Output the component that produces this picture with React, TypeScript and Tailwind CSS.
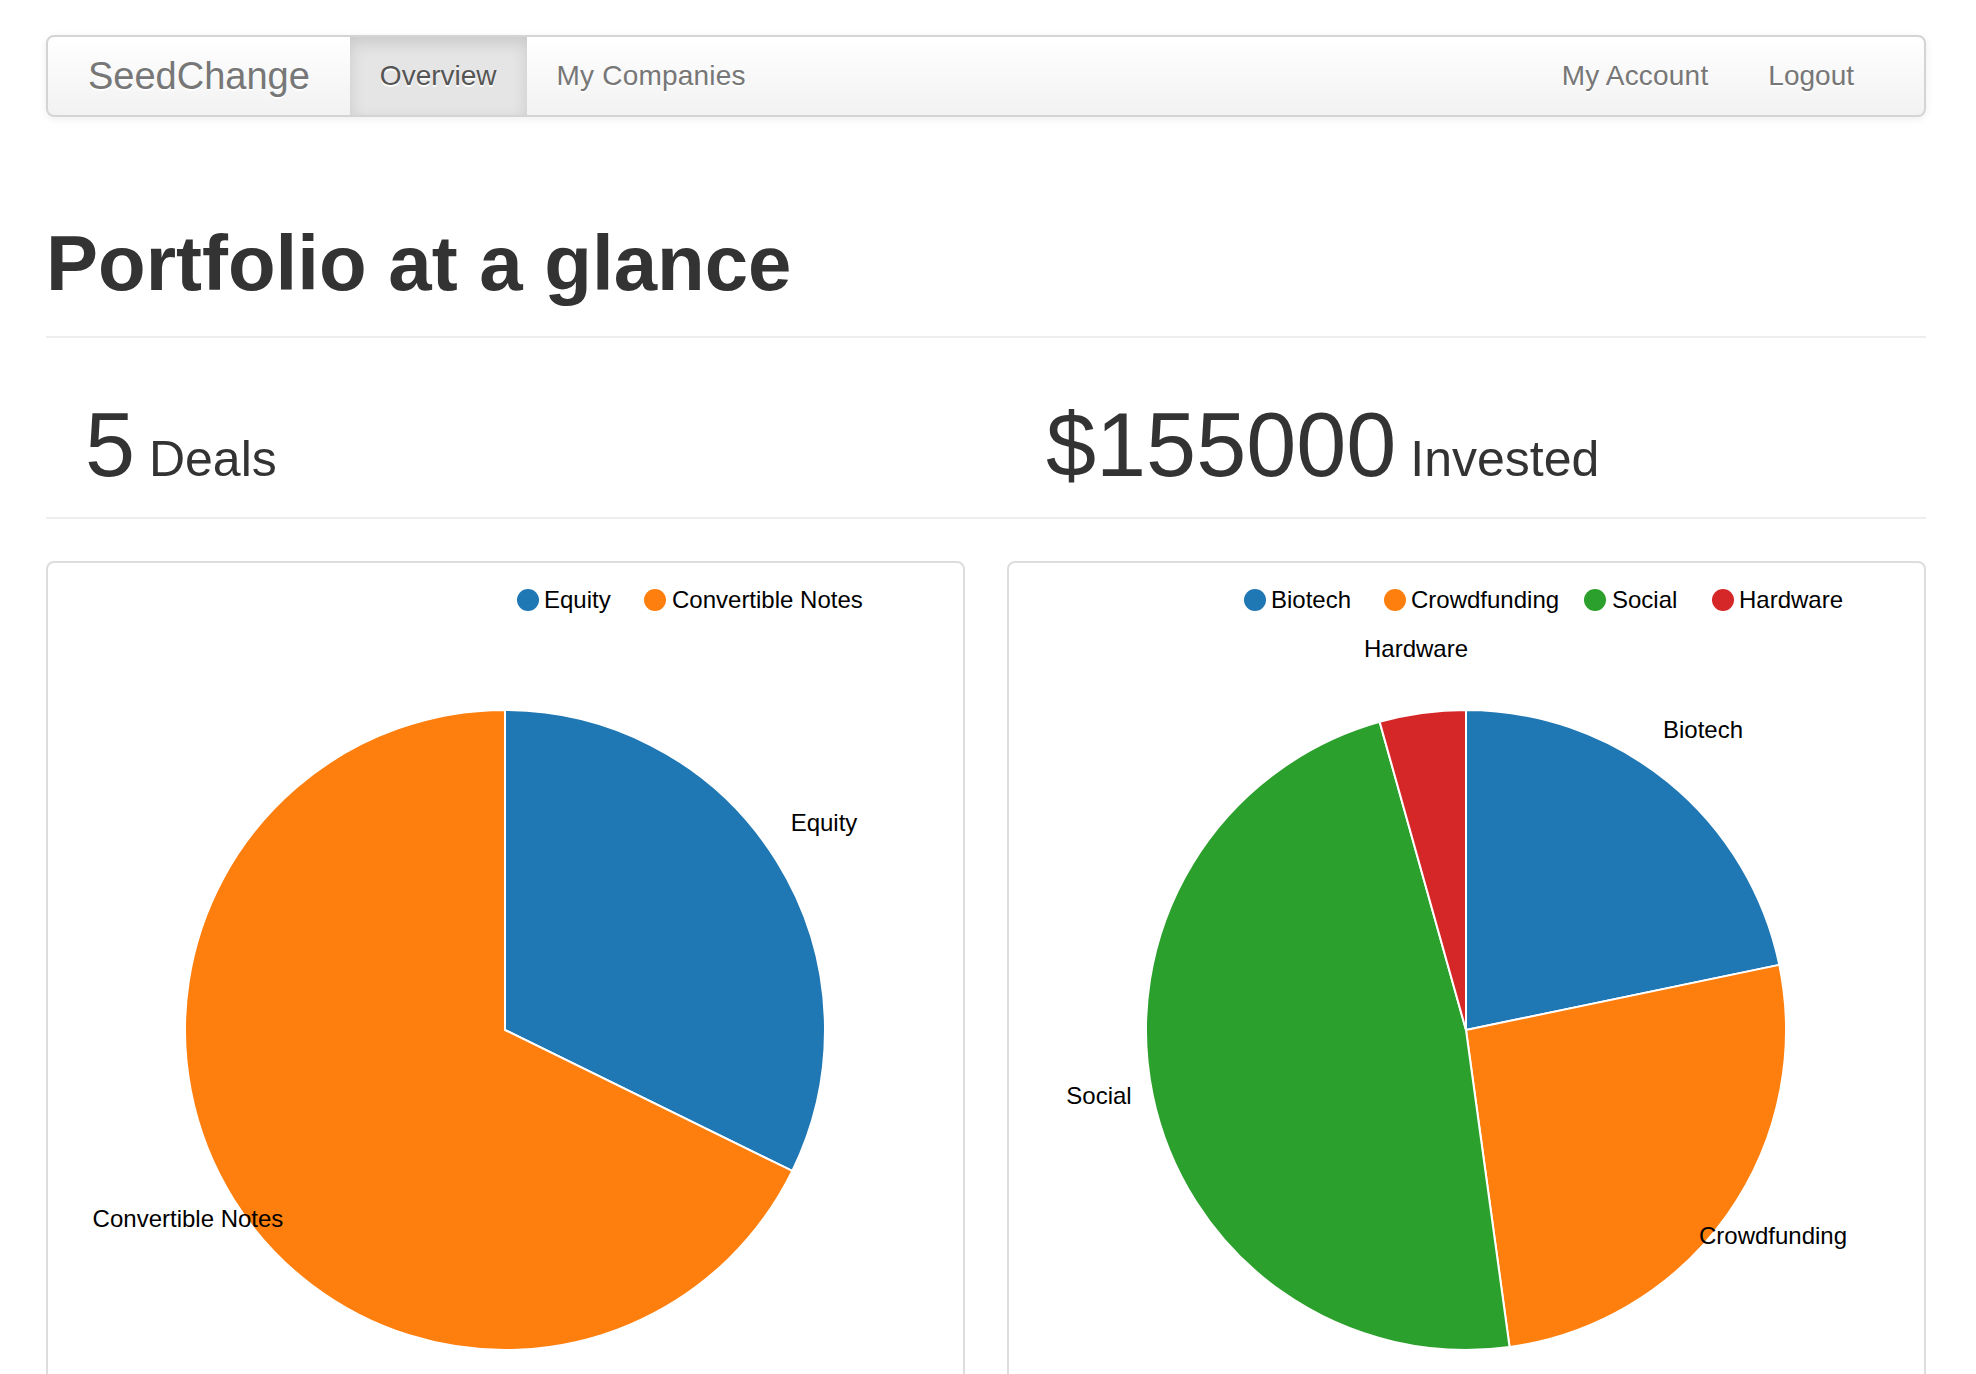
import React from "react";

type Slice = { color: string; start: number; end: number };

const CX = 457;
const CY = 467;
const R = 320;

function pt(deg: number) {
  const a = (deg * Math.PI) / 180;
  return [CX + R * Math.sin(a), CY - R * Math.cos(a)];
}

function arcPath(s: number, e: number) {
  const [x1, y1] = pt(s);
  const [x2, y2] = pt(e);
  const large = e - s > 180 ? 1 : 0;
  return `M${CX},${CY} L${x1},${y1} A${R},${R} 0 ${large} 1 ${x2},${y2} Z`;
}

type LegendItem = { cx: number; tx: number; color: string; label: string };
type Label = { x: number; y: number; text: string };

function PieChart({
  slices,
  legend,
  labels,
}: {
  slices: Slice[];
  legend: LegendItem[];
  labels: Label[];
}) {
  return (
    <svg width="915" height="830" className="block">
      {legend.map((l) => (
        <g key={l.label}>
          <circle cx={l.cx} cy={37} r={11} fill={l.color} />
          <text
            x={l.tx}
            y={37}
            dy="0.34em"
            fontSize="24"
            fontFamily="'Liberation Sans', Arial, sans-serif"
            fill="#000"
          >
            {l.label}
          </text>
        </g>
      ))}
      {slices.map((s, i) => (
        <path key={i} d={arcPath(s.start, s.end)} fill={s.color} stroke="#fff" strokeWidth={2} />
      ))}
      {labels.map((l) => (
        <text
          key={l.text}
          x={l.x}
          y={l.y}
          dy="0.34em"
          textAnchor="middle"
          fontSize="24"
          fontFamily="'Liberation Sans', Arial, sans-serif"
          fill="#000"
        >
          {l.text}
        </text>
      ))}
    </svg>
  );
}

const BLUE = "#1f77b4";
const ORANGE = "#ff7f0e";
const GREEN = "#2ca02c";
const RED = "#d62728";

export default function App() {
  const eq = (10 / 31) * 360;
  const b = (5 / 23) * 360;
  const c = (11 / 23) * 360;
  const s = (22 / 23) * 360;
  return (
    <div className="h-[1374px] overflow-hidden bg-white font-['Liberation_Sans',Arial,sans-serif] text-[#333]">
      <div className="ml-[46px] w-[1880px] pt-[35px]">
        {/* Navbar */}
        <div className="h-[82px] flex items-stretch border-2 border-[#d4d4d4] rounded-[8px] overflow-hidden bg-linear-to-b from-white to-[#f2f2f2] shadow-[0_2px_8px_rgba(0,0,0,0.07)]">
          <a className="px-[40px] flex items-center text-[38px] text-[#777] font-light [text-shadow:0_2px_0_#fff]">
            SeedChange
          </a>
          <a className="px-[30px] flex items-center bg-[#e5e5e5] text-[#555] text-[28px] shadow-[inset_0_6px_16px_rgba(0,0,0,0.125)] [text-shadow:0_2px_0_#fff]">
            Overview
          </a>
          <a className="px-[30px] flex items-center text-[#777] text-[28px] tracking-[0.2px] [text-shadow:0_2px_0_#fff]">
            My Companies
          </a>
          <div className="ml-auto flex items-stretch pr-[40px]">
            <a className="px-[30px] flex items-center text-[#777] text-[28px] tracking-[0.2px] [text-shadow:0_2px_0_#fff]">
              My Account
            </a>
            <a className="px-[30px] flex items-center text-[#777] text-[28px] [text-shadow:0_2px_0_#fff]">
              Logout
            </a>
          </div>
        </div>

        {/* Header */}
        <div className="mt-[107px] pb-[34px] border-b-2 border-[#eee]">
          <h1 className="text-[78px] leading-[78px] font-bold text-[#333]">Portfolio at a glance</h1>
        </div>

        {/* Stats */}
        <div className="grid grid-cols-2 gap-[42px] pt-[62px] pb-[27px] border-b-2 border-[#eee]">
          <div className="pl-[39px] text-[90px] leading-[90px] h-[90px] whitespace-pre">
            <span>5</span>
            <span className="text-[50px] leading-none"> Deals</span>
          </div>
          <div className="pl-[39px] text-[90px] leading-[90px] h-[90px] whitespace-pre">
            <span>$155000</span>
            <span className="text-[50px] leading-none"> Invested</span>
          </div>
        </div>

        {/* Charts */}
        <div className="mt-[42px] grid grid-cols-2 gap-[42px]">
          <div className="h-[900px] border-2 border-[#ddd] rounded-[8px] overflow-hidden">
            <PieChart
              slices={[
                { color: BLUE, start: 0, end: eq },
                { color: ORANGE, start: eq, end: 360 },
              ]}
              legend={[
                { cx: 480, tx: 496, color: BLUE, label: "Equity" },
                { cx: 607, tx: 624, color: ORANGE, label: "Convertible Notes" },
              ]}
              labels={[
                { x: 776, y: 260, text: "Equity" },
                { x: 140, y: 656, text: "Convertible Notes" },
              ]}
            />
          </div>
          <div className="h-[900px] border-2 border-[#ddd] rounded-[8px] overflow-hidden">
            <PieChart
              slices={[
                { color: BLUE, start: 0, end: b },
                { color: ORANGE, start: b, end: c },
                { color: GREEN, start: c, end: s },
                { color: RED, start: s, end: 360 },
              ]}
              legend={[
                { cx: 246, tx: 262, color: BLUE, label: "Biotech" },
                { cx: 386, tx: 402, color: ORANGE, label: "Crowdfunding" },
                { cx: 586, tx: 603, color: GREEN, label: "Social" },
                { cx: 714, tx: 730, color: RED, label: "Hardware" },
              ]}
              labels={[
                { x: 407, y: 86, text: "Hardware" },
                { x: 694, y: 167, text: "Biotech" },
                { x: 90, y: 533, text: "Social" },
                { x: 764, y: 673, text: "Crowdfunding" },
              ]}
            />
          </div>
        </div>
      </div>
    </div>
  );
}
